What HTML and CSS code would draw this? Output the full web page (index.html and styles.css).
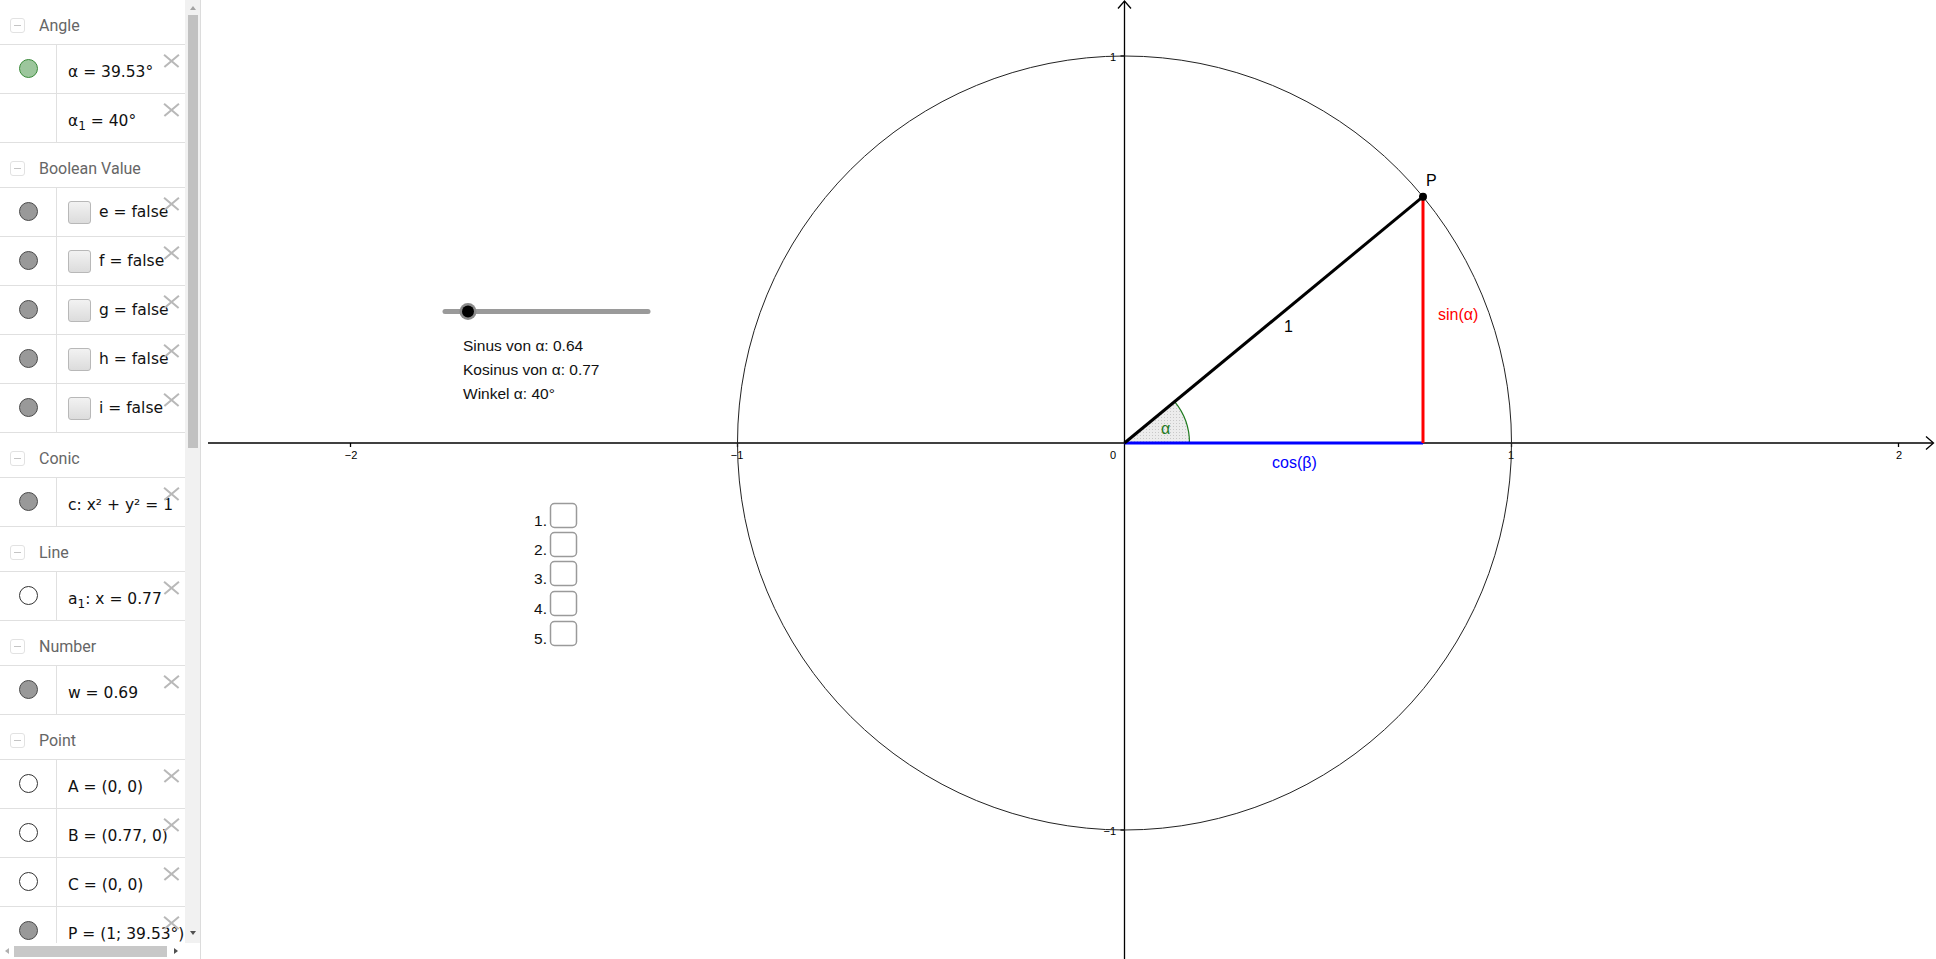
FILE: index.html
```html
<!DOCTYPE html>
<html lang="de">
<head>
  <meta charset="UTF-8" />
  <meta name="viewport" content="width=device-width, initial-scale=1.0" />
  <title>Einheitskreis</title>
  <link rel="stylesheet" href="styles.css">
</head>
<body>
  <div class="app">
    <div class="sidebar">
      <div class="sidebar-body">
        <div class="algebra">
          <div class="group-head"><span class="toggle"></span>Angle</div>
          <div class="row">
            <div class="marker"><span class="dot green"></span></div>
            <div class="value"><span>α = 39.53°</span></div>
            <span class="close"></span>
          </div>
          <div class="row">
            <div class="marker"></div>
            <div class="value"><span>α<sub>1</sub> = 40°</span></div>
            <span class="close"></span>
          </div>

          <div class="group-head"><span class="toggle"></span>Boolean Value</div>
          <div class="row">
            <div class="marker"><span class="dot"></span></div>
            <div class="value bool"><span class="check"></span><span>e = false</span></div>
            <span class="close"></span>
          </div>
          <div class="row">
            <div class="marker"><span class="dot"></span></div>
            <div class="value bool"><span class="check"></span><span>f = false</span></div>
            <span class="close"></span>
          </div>
          <div class="row">
            <div class="marker"><span class="dot"></span></div>
            <div class="value bool"><span class="check"></span><span>g = false</span></div>
            <span class="close"></span>
          </div>
          <div class="row">
            <div class="marker"><span class="dot"></span></div>
            <div class="value bool"><span class="check"></span><span>h = false</span></div>
            <span class="close"></span>
          </div>
          <div class="row">
            <div class="marker"><span class="dot"></span></div>
            <div class="value bool"><span class="check"></span><span>i = false</span></div>
            <span class="close"></span>
          </div>

          <div class="group-head"><span class="toggle"></span>Conic</div>
          <div class="row">
            <div class="marker"><span class="dot"></span></div>
            <div class="value"><span>c: x² + y² = 1</span></div>
            <span class="close"></span>
          </div>

          <div class="group-head"><span class="toggle"></span>Line</div>
          <div class="row">
            <div class="marker"><span class="dot empty"></span></div>
            <div class="value"><span>a<sub>1</sub>: x = 0.77</span></div>
            <span class="close"></span>
          </div>

          <div class="group-head"><span class="toggle"></span>Number</div>
          <div class="row">
            <div class="marker"><span class="dot"></span></div>
            <div class="value"><span>w = 0.69</span></div>
            <span class="close"></span>
          </div>

          <div class="group-head"><span class="toggle"></span>Point</div>
          <div class="row">
            <div class="marker"><span class="dot empty"></span></div>
            <div class="value"><span>A = (0, 0)</span></div>
            <span class="close"></span>
          </div>
          <div class="row">
            <div class="marker"><span class="dot empty"></span></div>
            <div class="value"><span>B = (0.77, 0)</span></div>
            <span class="close"></span>
          </div>
          <div class="row">
            <div class="marker"><span class="dot empty"></span></div>
            <div class="value"><span>C = (0, 0)</span></div>
            <span class="close"></span>
          </div>
          <div class="row">
            <div class="marker"><span class="dot"></span></div>
            <div class="value"><span>P = (1; 39.53°)</span></div>
            <span class="close"></span>
          </div>
        </div>
        <div class="vscroll">
          <span class="arrow-up"></span>
          <div class="vthumb"></div>
          <span class="arrow-down"></span>
        </div>
      </div>
      <div class="hscroll">
        <span class="arrow-left"></span>
        <div class="hthumb"></div>
        <span class="arrow-right"></span>
      </div>
    </div>

    <div class="graphics">
      <svg width="1728" height="959" viewBox="208 0 1728 959">
        <defs>
          <pattern id="dots" width="3" height="3" patternUnits="userSpaceOnUse">
            <rect width="3" height="3" fill="#ececec"/>
            <rect width="1" height="1" fill="#c8c8c8"/>
          </pattern>
        </defs>

        <!-- axes -->
        <g stroke="#000" stroke-width="1.3" fill="none">
          <line x1="208" y1="443" x2="1933" y2="443"/>
          <polyline points="1926,436.5 1933.5,443 1926,449.5"/>
          <line x1="1124.5" y1="959" x2="1124.5" y2="1.5"/>
          <polyline points="1118,8.5 1124.5,1 1131,8.5"/>
          <line x1="350.5" y1="443" x2="350.5" y2="447"/>
          <line x1="737.5" y1="443" x2="737.5" y2="447"/>
          <line x1="1511.5" y1="443" x2="1511.5" y2="447"/>
          <line x1="1898.5" y1="443" x2="1898.5" y2="447"/>
          <line x1="1120.5" y1="56" x2="1124.5" y2="56"/>
          <line x1="1120.5" y1="830" x2="1124.5" y2="830"/>
        </g>
        <g class="axis-label">
          <text x="351" y="459" text-anchor="middle">−2</text>
          <text x="737" y="459" text-anchor="middle">−1</text>
          <text x="1113" y="459" text-anchor="middle">0</text>
          <text x="1511" y="459" text-anchor="middle">1</text>
          <text x="1899" y="459" text-anchor="middle">2</text>
          <text x="1116" y="61" text-anchor="end">1</text>
          <text x="1116" y="835" text-anchor="end">−1</text>
        </g>

        <circle cx="1124.5" cy="443" r="387" fill="none" stroke="#222" stroke-width="1"/>

        <path d="M1124.5 443 L1189.5 443 A65 65 0 0 0 1174.63 401.63 Z" fill="url(#dots)"/>
        <path d="M1189.5 443 A65 65 0 0 0 1174.63 401.63" fill="none" stroke="#1f7a1f" stroke-width="1.2"/>

        <line x1="1124.5" y1="443" x2="1423" y2="443" stroke="#0000ff" stroke-width="3"/>
        <line x1="1423" y1="196.7" x2="1423" y2="443" stroke="#ff0000" stroke-width="3"/>
        <line x1="1124.5" y1="443" x2="1423" y2="196.7" stroke="#000" stroke-width="3"/>
        <circle cx="1423" cy="196.7" r="4" fill="#000"/>

        <g class="label">
          <text x="1426" y="186">P</text>
          <text x="1284" y="332">1</text>
          <text x="1438" y="320" fill="#ff0000">sin(α)</text>
          <text x="1272" y="468" fill="#0000ff">cos(β)</text>
          <text x="1161" y="434" fill="#1f7a1f">α</text>
        </g>

        <!-- slider w -->
        <line x1="445" y1="311.5" x2="648" y2="311.5" stroke="#9a9a9a" stroke-width="5" stroke-linecap="round"/>
        <circle cx="468" cy="311.5" r="8.5" fill="#8a8a8a"/>
        <circle cx="468" cy="311.5" r="6" fill="#000"/>

        <g class="info">
          <text x="463" y="351">Sinus von α: 0.64</text>
          <text x="463" y="375">Kosinus von α: 0.77</text>
          <text x="463" y="399">Winkel α: 40°</text>
        </g>

        <g class="quiz">
          <text x="547" y="526" text-anchor="end">1.</text>
          <rect x="550.5" y="503.5" width="26" height="24" rx="4"/>
          <text x="547" y="555" text-anchor="end">2.</text>
          <rect x="550.5" y="532.5" width="26" height="24" rx="4"/>
          <text x="547" y="584" text-anchor="end">3.</text>
          <rect x="550.5" y="561.5" width="26" height="24" rx="4"/>
          <text x="547" y="614" text-anchor="end">4.</text>
          <rect x="550.5" y="591.5" width="26" height="24" rx="4"/>
          <text x="547" y="644" text-anchor="end">5.</text>
          <rect x="550.5" y="621.5" width="26" height="24" rx="4"/>
        </g>
      </svg>
    </div>
  </div>
</body>
</html>
```

FILE: styles.css
```css
body {
  margin: 0;
  font-family: "DejaVu Sans", sans-serif;
  background: #fff;
  overflow: hidden;
}
.app {
  display: flex;
  width: 1936px;
  height: 959px;
}
.sidebar {
  width: 200px;
  flex-shrink: 0;
  display: flex;
  flex-direction: column;
  border-right: 1px solid #dcdcdc;
}
.sidebar-body {
  display: flex;
  height: 943px;
}
.algebra {
  width: 185px;
  overflow: hidden;
}
.group-head {
  height: 45px;
  box-sizing: border-box;
  padding-top: 6px;
  border-bottom: 1px solid #e0e0e0;
  display: flex;
  align-items: center;
  font-family: Roboto, sans-serif;
  font-size: 16px;
  color: #666;
}
.toggle {
  width: 15px;
  height: 15px;
  box-sizing: border-box;
  border: 1px solid #e2e2e2;
  border-radius: 3px;
  margin: 0 14px 0 10px;
  position: relative;
}
.toggle::after {
  content: "";
  position: absolute;
  left: 3px;
  right: 3px;
  top: 6px;
  height: 1px;
  background: #c4c4c4;
}
.row {
  height: 49px;
  box-sizing: border-box;
  border-bottom: 1px solid #e0e0e0;
  display: flex;
  position: relative;
}
.marker {
  width: 56px;
  flex-shrink: 0;
  border-right: 1px solid #e0e0e0;
  display: flex;
  justify-content: center;
  align-items: flex-start;
}
.dot {
  width: 19px;
  height: 19px;
  box-sizing: border-box;
  margin-top: 14px;
  border-radius: 50%;
  border: 1px solid #4a4a4a;
  background: #999;
}
.dot.green {
  background: #9cc69c;
  border-color: #3a8a3a;
}
.dot.empty {
  background: #fff;
  border-color: #333;
}
.value {
  padding: 5px 0 0 11px;
  display: flex;
  align-items: center;
  white-space: nowrap;
  font-size: 15.5px;
  color: #111;
}
.value sub {
  font-size: 12px;
  line-height: 0;
  position: relative;
  top: 4px;
  vertical-align: baseline;
}
.value.bool {
  padding-top: 0;
}
.check {
  width: 23px;
  height: 23px;
  box-sizing: border-box;
  border: 1px solid #b8b8b8;
  border-radius: 3px;
  background: linear-gradient(#f2f2f2, #dcdcdc);
  margin-right: 8px;
}
.close {
  position: absolute;
  right: 7px;
  top: 9px;
  width: 15px;
  height: 14px;
}
.close::before,
.close::after {
  content: "";
  position: absolute;
  left: -1px;
  top: 6px;
  width: 19px;
  height: 1.5px;
  background: #b8b8b8;
  transform: rotate(40deg);
}
.close::after {
  transform: rotate(-40deg);
}
.vscroll {
  width: 15px;
  background: #f1f1f1;
  display: flex;
  flex-direction: column;
  align-items: center;
}
.vthumb {
  width: 10px;
  height: 433px;
  background: #c1c1c1;
  margin-top: 5px;
  flex-shrink: 0;
}
.arrow-up {
  margin-top: 6px;
  border: 3px solid transparent;
  border-bottom: 4px solid #a3a3a3;
  border-top: 0;
}
.arrow-down {
  margin-top: auto;
  margin-bottom: 8px;
  border: 3px solid transparent;
  border-top: 4px solid #505050;
  border-bottom: 0;
}
.hscroll {
  height: 16px;
  width: 185px;
  display: flex;
  align-items: center;
}
.hthumb {
  width: 153px;
  height: 11px;
  background: #c8c8c8;
  margin: 0 7px 0 5px;
}
.arrow-left {
  margin-left: 5px;
  border: 3px solid transparent;
  border-right: 4px solid #b0b0b0;
  border-left: 0;
}
.arrow-right {
  border: 3px solid transparent;
  border-left: 4px solid #505050;
  border-right: 0;
}
.graphics {
  flex: 1;
  margin-left: 7px;
  overflow: hidden;
}
.graphics svg {
  display: block;
}
.axis-label text {
  font-family: "Liberation Sans", sans-serif;
  font-size: 11px;
  fill: #000;
}
.label text {
  font-family: "Liberation Sans", sans-serif;
  font-size: 16px;
}
.info text,
.quiz text {
  font-family: "Liberation Sans", sans-serif;
  font-size: 15.5px;
  fill: #111;
}
.quiz rect {
  fill: #fff;
  stroke: #9a9a9a;
  stroke-width: 1.5;
}
```
